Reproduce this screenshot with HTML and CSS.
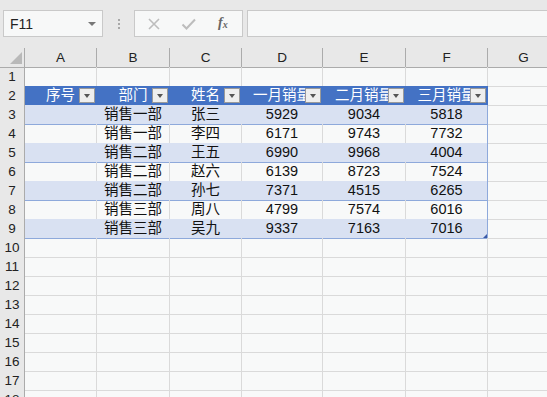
FILE: index.html
```html
<!DOCTYPE html>
<html>
<head>
<meta charset="utf-8">
<link rel="stylesheet" href="styles.css">
</head>
<body>
<div class="toolbar">
  <div class="namebox"><span class="nb-text">F11</span><span class="nb-arrow"></span></div>
  <div class="sep"><i></i><i></i><i></i></div>
  <div class="fbtns">
    <svg class="ico" width="14" height="14" viewBox="0 0 14 14"><path d="M2 2 L12 12 M12 2 L2 12" stroke="#bdbdbd" stroke-width="1.6" fill="none"/></svg>
    <svg class="ico" width="16" height="14" viewBox="0 0 16 14"><path d="M1.5 7.5 L5.5 11.5 L14 2.5" stroke="#bdbdbd" stroke-width="2" fill="none"/></svg>
    <span class="fx">f<sub>x</sub></span>
  </div>
  <div class="finput"></div>
</div>

<div class="sheet">
  <div class="row hdr">
    <div class="corner"><span class="tri"></span></div>
    <div class="ch">A</div><div class="ch">B</div><div class="ch">C</div><div class="ch">D</div><div class="ch">E</div><div class="ch">F</div><div class="ch">G</div>
  </div>

  <div class="row"><div class="rh">1</div><div class="c"></div><div class="c"></div><div class="c"></div><div class="c"></div><div class="c"></div><div class="c"></div><div class="c"></div></div>

  <div class="row">
    <div class="rh">2</div>
    <div class="c th">序号<span class="fb"></span></div>
    <div class="c th">部门<span class="fb"></span></div>
    <div class="c th">姓名<span class="fb"></span></div>
    <div class="c th">一月销量<span class="fb"></span></div>
    <div class="c th">二月销量<span class="fb"></span></div>
    <div class="c th last">三月销量<span class="fb"></span></div>
    <div class="c"></div>
  </div>

  <div class="row"><div class="rh">3</div><div class="c band"></div><div class="c band">销售一部</div><div class="c band">张三</div><div class="c band">5929</div><div class="c band">9034</div><div class="c band last">5818</div><div class="c"></div></div>
  <div class="row"><div class="rh">4</div><div class="c tw"></div><div class="c tw">销售一部</div><div class="c tw">李四</div><div class="c tw">6171</div><div class="c tw">9743</div><div class="c tw last">7732</div><div class="c"></div></div>
  <div class="row"><div class="rh">5</div><div class="c band"></div><div class="c band">销售二部</div><div class="c band">王五</div><div class="c band">6990</div><div class="c band">9968</div><div class="c band last">4004</div><div class="c"></div></div>
  <div class="row"><div class="rh">6</div><div class="c tw"></div><div class="c tw">销售二部</div><div class="c tw">赵六</div><div class="c tw">6139</div><div class="c tw">8723</div><div class="c tw last">7524</div><div class="c"></div></div>
  <div class="row"><div class="rh">7</div><div class="c band"></div><div class="c band">销售二部</div><div class="c band">孙七</div><div class="c band">7371</div><div class="c band">4515</div><div class="c band last">6265</div><div class="c"></div></div>
  <div class="row"><div class="rh">8</div><div class="c tw"></div><div class="c tw">销售三部</div><div class="c tw">周八</div><div class="c tw">4799</div><div class="c tw">7574</div><div class="c tw last">6016</div><div class="c"></div></div>
  <div class="row"><div class="rh">9</div><div class="c band"></div><div class="c band">销售三部</div><div class="c band">吴九</div><div class="c band">9337</div><div class="c band">7163</div><div class="c band last">7016<span class="handle"></span></div><div class="c"></div></div>

  <div class="row"><div class="rh">10</div><div class="c"></div><div class="c"></div><div class="c"></div><div class="c"></div><div class="c"></div><div class="c"></div><div class="c"></div></div>
  <div class="row"><div class="rh">11</div><div class="c"></div><div class="c"></div><div class="c"></div><div class="c"></div><div class="c"></div><div class="c"></div><div class="c"></div></div>
  <div class="row"><div class="rh">12</div><div class="c"></div><div class="c"></div><div class="c"></div><div class="c"></div><div class="c"></div><div class="c"></div><div class="c"></div></div>
  <div class="row"><div class="rh">13</div><div class="c"></div><div class="c"></div><div class="c"></div><div class="c"></div><div class="c"></div><div class="c"></div><div class="c"></div></div>
  <div class="row"><div class="rh">14</div><div class="c"></div><div class="c"></div><div class="c"></div><div class="c"></div><div class="c"></div><div class="c"></div><div class="c"></div></div>
  <div class="row"><div class="rh">15</div><div class="c"></div><div class="c"></div><div class="c"></div><div class="c"></div><div class="c"></div><div class="c"></div><div class="c"></div></div>
  <div class="row"><div class="rh">16</div><div class="c"></div><div class="c"></div><div class="c"></div><div class="c"></div><div class="c"></div><div class="c"></div><div class="c"></div></div>
  <div class="row"><div class="rh">17</div><div class="c"></div><div class="c"></div><div class="c"></div><div class="c"></div><div class="c"></div><div class="c"></div><div class="c"></div></div>
  <div class="row"><div class="rh">18</div><div class="c"></div><div class="c"></div><div class="c"></div><div class="c"></div><div class="c"></div><div class="c"></div><div class="c"></div></div>
</div>
</body>
</html>
```

FILE: styles.css
```css
html, body {
  margin: 0;
  padding: 0;
  width: 547px;
  height: 397px;
  overflow: hidden;
  background: #e8e8e8;
  font-family: "Liberation Sans", "Noto Sans CJK SC", sans-serif;
}

.toolbar {
  height: 48px;
  box-sizing: border-box;
  padding: 10px 0 0 3px;
  display: flex;
  align-items: flex-start;
  background: #e8e8e8;
}

.namebox {
  width: 100px;
  height: 27px;
  box-sizing: border-box;
  border: 1px solid #c9c9c9;
  background: #f7f8f8;
  display: flex;
  align-items: center;
  justify-content: space-between;
  padding: 0 6px 0 6px;
}

.nb-text {
  font-size: 14px;
  color: #222;
}

.nb-arrow {
  width: 0;
  height: 0;
  border-left: 4px solid transparent;
  border-right: 4px solid transparent;
  border-top: 4px solid #777;
}

.sep {
  width: 31px;
  height: 27px;
  display: flex;
  flex-direction: column;
  align-items: center;
  justify-content: center;
  gap: 2px;
}

.sep i {
  display: block;
  width: 2px;
  height: 2px;
  background: #a8a8a8;
}

.fbtns {
  width: 109px;
  height: 27px;
  box-sizing: border-box;
  border: 1px solid #c9c9c9;
  background: #f7f8f8;
  display: flex;
  align-items: center;
  padding-left: 12px;
}

.fbtns .ico:first-child {
  margin-right: 20px;
}

.fbtns .ico {
  display: block;
}

.fx {
  margin-left: 21px;
  font-family: "Liberation Serif", serif;
  font-style: italic;
  font-weight: bold;
  font-size: 14px;
  color: #666;
  line-height: 14px;
}

.fx sub {
  font-size: 10px;
  vertical-align: -1px;
}

.finput {
  flex: 1;
  margin-left: 4px;
  height: 27px;
  box-sizing: border-box;
  border: 1px solid #c9c9c9;
  border-right: none;
  background: #f7f8f8;
}

.sheet {
  background: #f8f9f9;
}

.row {
  display: grid;
  grid-template-columns: 25px 72px 73px 72px 81px 83px 82px 72px;
  height: 19px;
}

.hdr .ch,
.hdr .corner {
  background: #e8e8e8;
  border-right: 1px solid #ababab;
  border-bottom: 1px solid #ababab;
  box-sizing: border-box;
  font-size: 13.5px;
  color: #222;
  text-align: center;
  line-height: 19px;
}

.corner {
  position: relative;
}

.tri {
  position: absolute;
  right: 2px;
  bottom: 3px;
  width: 0;
  height: 0;
  border-left: 12px solid transparent;
  border-bottom: 12px solid #b9b9b9;
}

.rh {
  background: #e8e8e8;
  border-right: 1px solid #ababab;
  border-bottom: 1px solid #d2d2d2;
  box-sizing: border-box;
  font-size: 13.5px;
  color: #222;
  text-align: center;
  line-height: 19px;
}

.c {
  position: relative;
  border-right: 1px solid #dadada;
  border-bottom: 1px solid #dadada;
  box-sizing: border-box;
  font-size: 14.5px;
  color: #111;
  text-align: center;
  line-height: 19px;
  white-space: nowrap;
  overflow: hidden;
}

.th {
  background: #4472c4;
  color: #fff;
  font-weight: normal;
  border-right-color: #4472c4;
  border-bottom-color: #4472c4;
}

.band {
  background: #d9e1f2;
  border-right-color: #d9e1f2;
  border-bottom-color: #8ea9db;
}

.tw {
  border-bottom-color: #8ea9db;
}

.c.last {
  border-right-color: #8ea9db;
}

.th.last {
  border-right-color: #4472c4;
}

.fb {
  position: absolute;
  right: 1px;
  top: 2px;
  width: 16px;
  height: 15px;
  box-sizing: border-box;
  background: #eeeeee;
  border: 1px solid #9a9a9a;
}

.fb::after {
  content: "";
  position: absolute;
  left: 4px;
  top: 5px;
  width: 0;
  height: 0;
  border-left: 3.5px solid transparent;
  border-right: 3.5px solid transparent;
  border-top: 4px solid #555;
}

.handle {
  position: absolute;
  right: 0;
  bottom: 0;
  width: 0;
  height: 0;
  border-left: 4px solid transparent;
  border-bottom: 4px solid #3b5aa6;
}
```
